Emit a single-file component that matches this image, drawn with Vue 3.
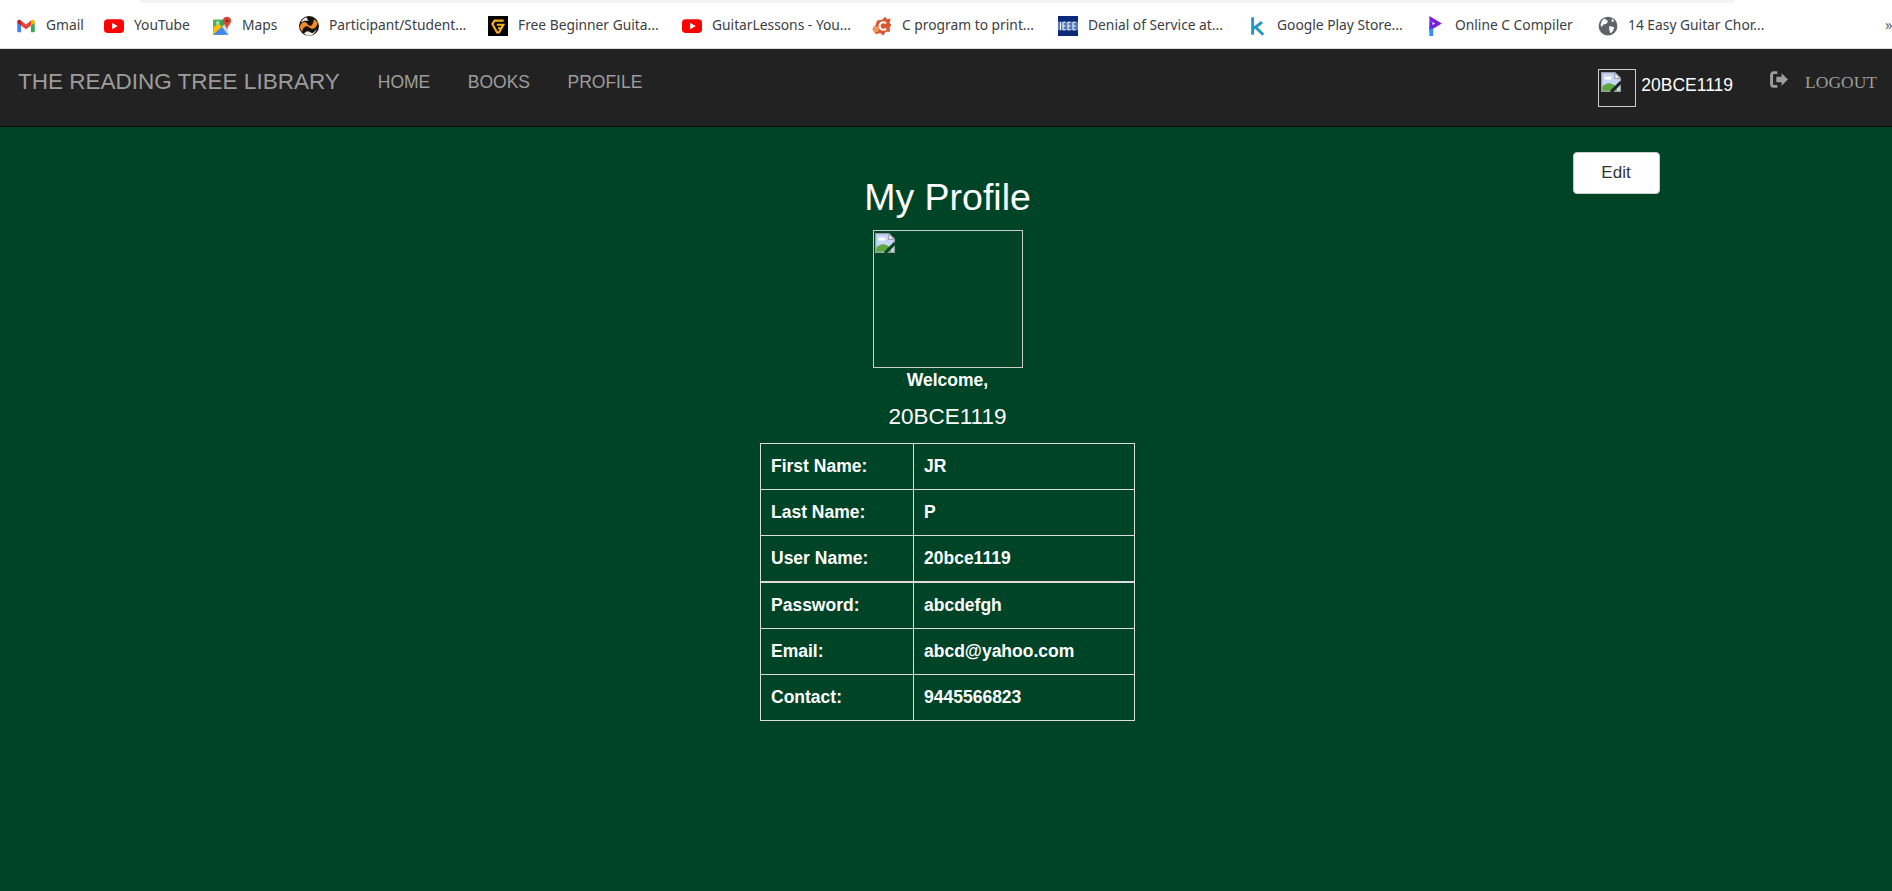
<script setup>
const bookmarks = [
  { icon: 'gmail', label: 'Gmail', w: 88 },
  { icon: 'yt', label: 'YouTube', w: 108 },
  { icon: 'maps', label: 'Maps', w: 87 },
  { icon: 'part', label: 'Participant/Student...', w: 189 },
  { icon: 'guitar', label: 'Free Beginner Guita...', w: 194 },
  { icon: 'yt', label: 'GuitarLessons - You...', w: 190 },
  { icon: 'c', label: 'C program to print...', w: 186 },
  { icon: 'ieee', label: 'Denial of Service at...', w: 189 },
  { icon: 'k', label: 'Google Play Store...', w: 178 },
  { icon: 'online', label: 'Online C Compiler', w: 173 },
  { icon: 'globe', label: '14 Easy Guitar Chor...', w: 170 }
]
const rows = [
  ['First Name:', 'JR'],
  ['Last Name:', 'P'],
  ['User Name:', '20bce1119'],
  ['Password:', 'abcdefgh'],
  ['Email:', 'abcd@yahoo.com'],
  ['Contact:', '9445566823']
]
</script>

<template>
  <div class="page">
    <div class="bookmarks">
      <div class="omnibox-edge"></div>
      <div v-for="b in bookmarks" :key="b.label" class="bookmark" :style="{ width: b.w + 'px' }">
        <svg class="fav" viewBox="0 0 16 16">
          <template v-if="b.icon === 'gmail'">
            <path d="M1 5v7.200q0 .800.800.800H4V7z" fill="#4285f4" />
            <path d="M12 7v6h2.200q.800 0 .800-.800V5z" fill="#34a853" />
            <path d="M1 5.500V4.500C1 3 2.800 2.600 3.800 3.400L4 3.600V7.500z" fill="#c5221f" />
            <path d="M4 3.600 8 6.800l4-3.200V7.500L8 10.600 4 7.500z" fill="#ea4335" />
            <path d="M12 3.600 12.200 3.400C13.200 2.600 15 3 15 4.500V5.500L12 7.500z" fill="#fbbc04" />
          </template>
          <template v-else-if="b.icon === 'yt'">
            <rect x="0" y="2.500" width="16" height="11" rx="3" fill="#f00" />
            <path d="M6.500 5.500v5L11 8z" fill="#fff" />
          </template>
          <template v-else-if="b.icon === 'maps'">
            <path d="M1 3H10V15H1z" fill="#34a853" />
            <path d="M1 14.500 7.500 8.500 13.500 15H1.500z" fill="#4285f4" />
            <path d="M1 9 5 5.500 8 8.500 1 15z" fill="#fbbc04" />
            <path d="M8 8.500 10 6.500 13 10V15z" fill="#d6dbe0" />
            <path d="M1 3H9.500L1 9z" fill="#4caf50" />
            <circle cx="4.500" cy="5.500" r="1.500" fill="#a8dab5" />
            <path d="M12 0.500a3.300 3.300 0 0 1 3.300 3.300C15.300 6 13 7.500 12 10.500 11 7.500 8.700 6 8.700 3.800A3.300 3.300 0 0 1 12 .500z" fill="#db4437" />
            <circle cx="12" cy="3.800" r="1.200" fill="#8c2a20" />
          </template>
          <template v-else-if="b.icon === 'part'">
            <circle cx="8" cy="8" r="8" fill="#111" />
            <path d="M.500 9C2 4 5 4 7 6.500S11 8 12 2.500L15 5C14 11 10 11 8 9S3 9 2.500 13z" fill="#f08a24" />
            <path d="M1.500 5C2.500 3 4 1.500 6 1L7.500 4C5 3.500 3.500 4 1.500 5zM4 14C6 12 7 11.500 9 13S12 13 14 10.500C13.500 13 11 15.500 8 15.700 6.500 15.700 5 15 4 14z" fill="#f7ece0" />
          </template>
          <template v-else-if="b.icon === 'guitar'">
            <rect width="16" height="16" fill="#000" />
            <path d="M12.500 3.700H5.200L3.500 6.500 7.200 13.200H8.800L12.300 7H7M8 9.800h2.500" fill="none" stroke="#fbb215" stroke-width="1.700" />
          </template>
          <template v-else-if="b.icon === 'c'">
            <path d="M.500 10 3 7 4 3.500 8 3 10.500 .500 12 2.500 15 2 14 5.500 15.500 7 14 9.500 14.500 12.500 11 12.500 9 15.500 6.500 13.500 3 14.500z" fill="#d9562e" />
            <circle cx="3" cy="10.500" r="2.500" fill="#ea9a5d" />
            <path d="M11.300 6A3 3 0 1 0 11.300 10" fill="none" stroke="#fff" stroke-width="1.700" />
          </template>
          <template v-else-if="b.icon === 'ieee'">
            <rect width="16" height="16" fill="#0b2a7a" />
            <rect y="4.500" width="16" height="7" fill="#5578b8" />
            <path d="M2 5v6M4 5v6h2M4 8h2M4 5h2M8 5v6h2M8 8h2M8 5h2M12 5v6h2M12 8h2M12 5h2" stroke="#fff" stroke-width="0.800" fill="none" />
          </template>
          <template v-else-if="b.icon === 'k'">
            <path d="M4.500 1v14M4.500 10.500 12 5M7 9 13 15" fill="none" stroke="#2596c8" stroke-width="2.300" />
          </template>
          <template v-else-if="b.icon === 'online'">
            <path d="M3.500 0 13.500 6 3.500 12V8.500L8 6 3.500 3.500z" fill="#7c1fd8" />
            <path d="M3.500 3.500 6 5V9.500L3.500 11z" fill="#5a2be8" />
            <rect x="3.500" y="10" width="3" height="6" fill="#2b8cff" />
          </template>
          <template v-else>
            <circle cx="8" cy="8" r="7.500" fill="#5f6368" />
            <path d="M5 2l3 2-1 2-3 1-1 2-1-2 1-3zM9 8l4 1-1 3-2 2-1-3zM11 2l2 2-2 1z" fill="#fff" />
          </template>
        </svg>
        <span class="bm-label">{{ b.label }}</span>
      </div>
      <span class="more">»</span>
    </div>

    <nav class="navbar">
      <span class="brand">THE READING TREE LIBRARY</span>
      <a class="nav-link">HOME</a>
      <a class="nav-link">BOOKS</a>
      <a class="nav-link">PROFILE</a>
      <div class="nav-right">
        <div class="thumb">
          <svg class="broken" viewBox="0 0 16 16">
            <path d="M0.500 0.500H11L15.500 5V15.500H0.500z" fill="#c6d6f4" stroke="#9aa0a6" />
            <path d="M11 0.500V5H15.500z" fill="#fff" stroke="#9aa0a6" />
            <path d="M1 15V12C4 8 9 8 12 12L13 15z" fill="#5fa63f" />
            <path d="M3 6h5a1.500 1.500 0 0 0-2.500-2A1.500 1.500 0 0 0 3 6z" fill="#fff" />
            <path d="M8 16 16 8" stroke="#222" stroke-width="2.500" />
          </svg>
        </div>
        <span class="nav-user">20BCE1119</span>
        <svg class="logout-ic" viewBox="0 0 18 16">
          <path d="M7 1.500H3.500a2 2 0 0 0-2 2v9a2 2 0 0 0 2 2H7" fill="none" stroke="#9d9d9d" stroke-width="2.800" />
          <path d="M6 5.500h5V2l6 6-6 6v-3.500H6z" fill="#9d9d9d" />
        </svg>
        <span class="logout">LOGOUT</span>
      </div>
    </nav>

    <main class="main">
      <div></div>
      <section class="profile">
        <h1 class="title">My Profile</h1>
        <div class="avatar">
          <svg class="broken" viewBox="0 0 16 16">
            <path d="M0.500 0.500H11L15.500 5V15.500H0.500z" fill="#c6d6f4" stroke="#9aa0a6" />
            <path d="M11 0.500V5H15.500z" fill="#fff" stroke="#9aa0a6" />
            <path d="M1 15V12C4 8 9 8 12 12L13 15z" fill="#5fa63f" />
            <path d="M3 6h5a1.500 1.500 0 0 0-2.500-2A1.500 1.500 0 0 0 3 6z" fill="#fff" />
            <path d="M8 16 16 8" stroke="#004428" stroke-width="2.500" />
          </svg>
        </div>
        <div class="welcome">Welcome,</div>
        <div class="user">20BCE1119</div>
        <table class="info">
          <tbody>
            <tr v-for="r in rows" :key="r[0]">
              <td class="k">{{ r[0] }}</td>
              <td>{{ r[1] }}</td>
            </tr>
          </tbody>
        </table>
      </section>
      <div class="edit-col">
        <button class="edit">Edit</button>
      </div>
    </main>
  </div>
</template>

<style>
html, body { margin: 0; background: #004428; }
</style>

<style scoped>
.page {
  width: 1892px;
  height: 891px;
  overflow: hidden;
  display: flex;
  flex-direction: column;
  font-family: "Liberation Sans", Arial, sans-serif;
  background: #004428;
}
.bookmarks {
  position: relative;
  height: 49px;
  box-sizing: border-box;
  background: #fff;
  display: flex;
  align-items: center;
  padding: 4px 0 0 16px;
  border-bottom: 1px solid #d9d9d9;
  flex: none;
  overflow: hidden;
}
.omnibox-edge {
  position: absolute;
  left: 140px;
  top: 0;
  width: 1595px;
  height: 3px;
  background: #f1f3f4;
  border-radius: 0 0 10px 10px;
}
.bookmark { display: flex; align-items: center; gap: 10px; flex: none; }
.fav { width: 20px; height: 20px; flex: none; }
.bm-label {
  font-family: "Noto Sans", "Open Sans", sans-serif;
  font-size: 13.8px;
  color: #3c4043;
  white-space: nowrap;
  margin-bottom: 3px;
}
.more {
  position: absolute;
  left: 1885px;
  top: 14px;
  font-family: "Noto Sans", sans-serif;
  font-size: 15px;
  color: #5f6368;
}
.navbar {
  height: 78px;
  box-sizing: border-box;
  background: #222;
  border-bottom: 1px solid #080808;
  display: flex;
  align-items: flex-start;
  padding: 0 15px 0 18px;
  flex: none;
}
.brand {
  font-size: 22.5px;
  line-height: 26px;
  color: #9d9d9d;
  margin-top: 20px;
  margin-right: 38px;
  white-space: nowrap;
}
.nav-link {
  font-size: 17.5px;
  line-height: 20px;
  color: #9d9d9d;
  margin-top: 23px;
  margin-right: 37.5px;
}
.nav-right {
  margin-left: auto;
  display: flex;
  align-items: flex-start;
}
.thumb {
  width: 38px;
  height: 38px;
  margin-top: 20px;
  border: 1px solid #ccc;
  padding: 2px;
  box-sizing: border-box;
}
.broken { display: block; width: 20px; height: 20px; }
.nav-user {
  color: #fff;
  font-size: 17.5px;
  line-height: 20px;
  margin: 26px 0 0 5px;
}
.logout-ic { width: 19px; height: 17px; margin: 22px 0 0 37px; }
.logout {
  font-family: "Liberation Serif", serif;
  font-size: 17.5px;
  line-height: 20px;
  color: #9d9d9d;
  margin: 23px 0 0 16px;
}
.main {
  flex: 1;
  display: grid;
  grid-template-columns: 1fr 376px 1fr;
  padding-left: 3px;
  color: #fff;
}
.profile {
  display: flex;
  flex-direction: column;
  align-items: center;
  padding-top: 50px;
}
.title {
  margin: 0;
  font-size: 37.5px;
  font-weight: 400;
  line-height: 40px;
}
.avatar {
  width: 150px;
  height: 138px;
  border: 1px solid #ccc;
  margin-top: 13px;
  padding: 2px 1px;
  box-sizing: border-box;
}
.welcome {
  font-weight: 700;
  font-size: 17.5px;
  line-height: 20px;
  margin-top: 2px;
}
.user {
  font-size: 22.5px;
  line-height: 26px;
  margin-top: 14px;
}
.info {
  border-collapse: collapse;
  margin-top: 13px;
  width: 375px;
  font-size: 17.5px;
  font-weight: 700;
}
.info td {
  border: 1px solid #ddd;
  padding: 0 10px;
  height: 45px;
  box-sizing: content-box;
}
.info tr:nth-child(3) td { border-bottom-width: 2px; }
.info td.k { width: 132px; }
.edit-col { padding: 25px 0 0 437px; }
.edit {
  width: 87px;
  height: 42px;
  background: #fff;
  border: 1px solid #ccc;
  border-radius: 4px;
  color: #333;
  font-family: inherit;
  font-size: 17px;
}
</style>
